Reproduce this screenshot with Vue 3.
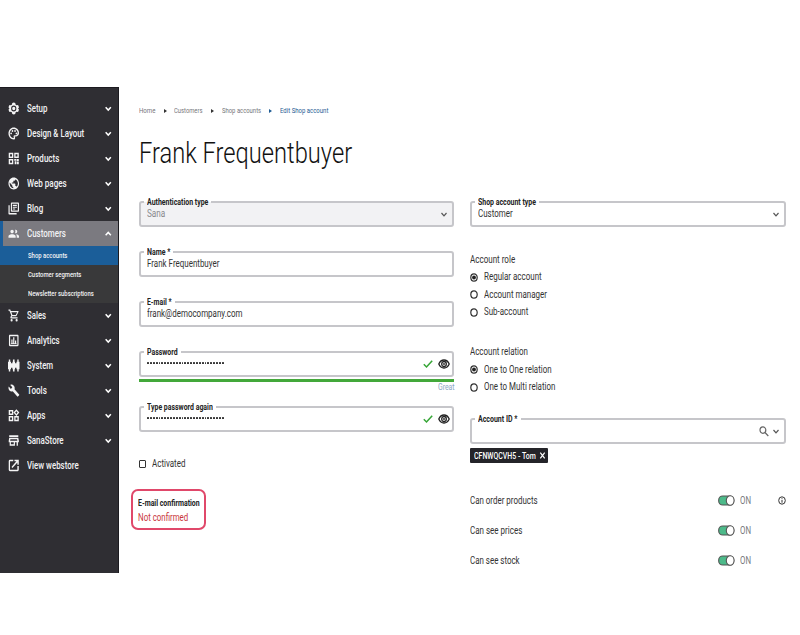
<script setup>
// Condenses a label horizontally so that it occupies the given width.
const fit = (el, { value }) => {
  el.style.transform = 'none'
  const natural = el.offsetWidth
  if (!natural || !value) return
  el.style.transform = `scaleX(${value / natural})`
  el.style.marginRight = `${value - natural}px`
}
const vFit = { mounted: fit, updated: fit }

const menuTop = [
  { icon: 'setup', label: 'Setup', w: 20.5 },
  { icon: 'palette', label: 'Design & Layout', w: 57 },
  { icon: 'products', label: 'Products', w: 32 },
  { icon: 'globe', label: 'Web pages', w: 39.5 },
  { icon: 'blog', label: 'Blog', w: 16 },
  { icon: 'people', label: 'Customers', w: 39, open: true },
]
const submenu = [
  { label: 'Shop accounts', w: 39.5, active: true },
  { label: 'Customer segments', w: 53.5 },
  { label: 'Newsletter subscriptions', w: 66 },
]
const menuBottom = [
  { icon: 'cart', label: 'Sales', w: 19.5 },
  { icon: 'chart', label: 'Analytics', w: 32.5 },
  { icon: 'system', label: 'System', w: 26.5 },
  { icon: 'tools', label: 'Tools', w: 19.5 },
  { icon: 'apps', label: 'Apps', w: 18.5 },
  { icon: 'store', label: 'SanaStore', w: 36.5 },
  { icon: 'external', label: 'View webstore', w: 52, leaf: true },
]
const groups = [
  { key: 'top', items: menuTop, sub: submenu },
  { key: 'bottom', items: menuBottom, sub: [] },
]
const icons = {
  setup: 'M12 1l3 1 1 3 2 1 3-.5 2 4-2 2.500 2 2.500-2 4-3-.5-2 1-1 3-3 1-3-1-1-3-2-1-3 .5-2-4 2-2.500-2-2.500 2-4 3 .5 2-1 1-3zM12 6.500a5.500 5.500 0 1 0 0 11 5.500 5.500 0 0 0 0-11zm0 2.200a3.300 3.300 0 1 1 0 6.600 3.300 3.300 0 0 1 0-6.600z',
  palette: 'M12 23C5.900 23 1 18.100 1 12S5.900 1 12 1s11 4.500 11 10c0 3.700-3 6.700-6.700 6.700h-1.600c-.28 0-.5.22-.5.5 0 .12.05.23.13.33.41.47.64 1.060.64 1.670A2.800 2.800 0 0 1 12 23zm0-19.300c-4.600 0-8.300 3.700-8.300 8.300s3.700 8.300 8.300 8.300c.28 0 .3-.22.3-.5a.54.54 0 0 0-.14-.35c-.41-.46-.63-1.050-.63-1.650a2.700 2.700 0 0 1 2.700-2.700H16.500c2 0 3.700-1.800 3.700-4 0-3.860-3.700-7.400-8.200-7.400zM6.500 10a1.800 1.800 0 1 0 0 3.600 1.800 1.800 0 0 0 0-3.600zM9.300 5.700a1.800 1.800 0 1 0 0 3.600 1.800 1.800 0 0 0 0-3.600zM14.700 5.700a1.800 1.800 0 1 0 0 3.600 1.800 1.800 0 0 0 0-3.600zM17.500 10a1.800 1.800 0 1 0 0 3.600 1.800 1.800 0 0 0 0-3.600z',
  products: 'M1.500 1.500h9.500v9.500H1.500zM4.300 4.300v4h4v-4zM13 1.500h9.500v9.500H13zM15.700 4.300v4h4v-4zM1.500 13h9.500v9.500H1.500zM4.300 15.700v4h4v-4zM13 13h4v3h-4zM18 13h4.500v4H18zM14 17h3v5.500h-3zM18 18h4.500v4.500H18z',
  globe: 'M12 1C5.900 1 1 5.900 1 12s4.900 11 11 11 11-4.900 11-11S18.100 1 12 1zm-1 19.800c-4.300-.5-7.600-4.200-7.600-8.700 0-.7.08-1.300.21-1.900L9 15.500v1c0 1.100.9 2 2 2zm7.300-2.800c-.26-.81-1-1.500-2-1.500h-1v-3.300c0-.55-.45-1-1-1H8v-2.200h2.200c.55 0 1-.45 1-1V6.700h2.200c1.100 0 2-.9 2-2v-.5c3.100 1.300 5.300 4.300 5.300 7.900 0 2.300-.9 4.300-2.400 5.900z',
  blog: 'M3.500 6H1v15c0 1.100.9 2 2 2h15v-2.500H3.500zM21 1H8C6.900 1 6 1.900 6 3v13c0 1.100.9 2 2 2h13c1.100 0 2-.9 2-2V3c0-1.100-.9-2-2-2zm-.5 14.700H8.300V3.300h12.200zM10 8.700h8.500v2H10zM10 12h5v2h-5zM10 5.300h8.500v2H10z',
  people: 'M16 11.500c1.900 0 3.300-1.500 3.300-3.300S17.900 5 16 5c-.5 0-1 .1-1.400.3.6.8.9 1.800.9 2.900s-.3 2.100-.9 2.900c.4.300.9.4 1.400.4zM8.500 11.500c1.900 0 3.500-1.500 3.500-3.300S10.400 5 8.500 5 5 6.400 5 8.200s1.600 3.300 3.500 3.300zm0 1.800C6 13.300 1 14.400 1 17v3h15v-3c0-2.600-5-3.700-7.500-3.700zm8 .1c1 .9 1.700 2 1.700 3.600v3H23v-3c0-2.300-3.700-3.400-6.500-3.600z',
  cart: 'M16 13.500c.8 0 1.500-.41 1.900-1.100L22 5a1 1 0 0 0-.9-1.500H5.800L4.700 1H1v2.300h2l3.800 8.200-1.500 2.700C4.400 15.800 5.400 17.500 7 17.500h13v-2.200H7.500l1-1.800zM7 5.800h12.200L16.200 11H9.200zM7.500 18.500a2.200 2.200 0 1 0 0 4.500 2.200 2.200 0 0 0 0-4.500zm10.500 0a2.200 2.200 0 1 0 0 4.500 2.200 2.200 0 0 0 0-4.500z',
  chart: 'M20 1.500H4c-1.100 0-2 .9-2 2v17c0 1.100.9 2 2 2h16c1.100 0 2-.9 2-2v-17c0-1.100-.9-2-2-2zm-.5 18.500h-15V4h15zM7 10h2.500v7H7zM10.800 6h2.500v11h-2.500zM14.600 12h2.500v5h-2.500zM6 17.300h12v1.200H6z',
  system: 'M1.700 1h3v4h1.600v3h3V5h1V1h3.400v4h1v3h3V5h1.600V1h3v4H24v14h-1.700v4h-3v-4h-1.600v-3h-3v3h-1v4h-3.400v-4h-1v-3h-3v3H4.700v4h-3v-4H0V5h1.700z',
  tools: 'M23.200 19.500l-9.600-9.600c.9-2.300.4-5-1.500-6.900-2-2-5-2.400-7.400-1.300L9 6 6 9 1.600 4.700C.4 7.100.9 10.100 2.900 12.100c1.900 1.900 4.600 2.400 6.900 1.500l9.600 9.600c.4.4 1 .4 1.400 0l2.400-2.300c.5-.4.5-1.100 0-1.400z',
  apps: 'M1.500 2h9.500v9H1.500zM4.300 4.700v3.600h4V4.700zM17.500.3l6.200 6.200-6.200 6.200-6.200-6.200zM17.500 4L15 6.500 17.500 9 20 6.500zM1.500 13h9.500v9.500H1.500zM4.300 15.700v4h4v-4zM13 13h9.500v9.500H13zM15.700 15.700v4h4v-4z',
  store: 'M2.500 2.500h19v3h-19zM2.500 7h19l1.200 5.500V15h-2v6.500h-2.700V15h-3.500v6.500h-11V15h-2v-2.500zM6 15v4h6v-4zM5 9.700l-.5 2.800h15L19 9.700z',
  external: 'M19.500 19.800H4.200V4.200H11V1.500H4A2.500 2.500 0 0 0 1.500 4v16A2.500 2.500 0 0 0 4 22.500h16a2.500 2.500 0 0 0 2.500-2.500V13h-3zM13.500 1.500v2.800h4L7.300 14.700l2 2L19.500 6.400v4h3V1.500z',
}
const crumbs = [
  { label: 'Home', w: 16.300 },
  { label: 'Customers', w: 28.800 },
  { label: 'Shop accounts', w: 39.300 },
  { label: 'Edit Shop account', w: 48, current: true },
]
const fields = [
  { label: 'Authentication type', lw: 61.500, value: 'Sana', w: 18, disabled: true },
  { label: 'Name *', lw: 23, value: 'Frank Frequentbuyer', w: 72.500 },
  { label: 'E-mail *', lw: 25, value: 'frank@democompany.com', w: 95.500 },
]
const passwords = [
  { label: 'Password', lw: 31, strength: true },
  { label: 'Type password again', lw: 66 },
]
const dots = Array.from({ length: 27 }, (_, i) => i)
const radioGroups = [
  { title: 'Account role', w: 45, options: [
    { label: 'Regular account', w: 57.500, on: true },
    { label: 'Account manager', w: 63 },
    { label: 'Sub-account', w: 44.500 },
  ] },
  { title: 'Account relation', w: 58, options: [
    { label: 'One to One relation', w: 67.500, on: true },
    { label: 'One to Multi relation', w: 71.500 },
  ] },
]
const toggles = [
  { label: 'Can order products', w: 67.500, info: true },
  { label: 'Can see prices', w: 52 },
  { label: 'Can see stock', w: 50 },
]
</script>

<template>
  <div class="page">
    <nav class="sidebar">
      <template v-for="g in groups" :key="g.key">
        <div v-for="m in g.items" :key="m.label" class="item" :class="{ open: m.open }">
          <svg class="icon" viewBox="0 0 24 24" preserveAspectRatio="none"><path :d="icons[m.icon]" fill-rule="evenodd" /></svg>
          <span class="grow"><span v-fit="m.w" class="t">{{ m.label }}</span></span>
          <svg v-if="!m.leaf" class="chev" viewBox="0 0 6 5"><path :d="m.open ? 'M.6 3.800 3 1.300l2.400 2.500' : 'M.6 1.200 3 3.700l2.400-2.500'" /></svg>
        </div>
        <div v-if="g.sub.length" class="submenu">
          <div v-for="s in g.sub" :key="s.label" class="sub" :class="{ active: s.active }">
            <span v-fit="s.w" class="t">{{ s.label }}</span>
          </div>
        </div>
      </template>
    </nav>

    <main class="content">
      <div class="crumbs">
        <template v-for="(c, i) in crumbs" :key="c.label">
          <i v-if="i" class="arrow" :class="{ current: c.current }"></i>
          <span :class="{ current: c.current }"><span v-fit="c.w" class="t">{{ c.label }}</span></span>
        </template>
      </div>
      <h1><span v-fit="213" class="t">Frank Frequentbuyer</span></h1>

      <div class="columns">
        <section class="col">
          <div v-for="f in fields" :key="f.label" class="field" :class="{ disabled: f.disabled }">
            <label class="label"><span v-fit="f.lw" class="t">{{ f.label }}</span></label>
            <span class="grow"><span v-fit="f.w" class="t">{{ f.value }}</span></span>
            <svg v-if="f.disabled" class="drop" viewBox="0 0 6 5"><path d="M.5 1 3 3.800 5.500 1" /></svg>
          </div>
          <template v-for="p in passwords" :key="p.label">
            <div class="field password">
              <label class="label"><span v-fit="p.lw" class="t">{{ p.label }}</span></label>
              <span class="grow dots"><i v-for="d in dots" :key="d"></i></span>
              <svg class="check" viewBox="0 0 10 8"><path d="M.8 4.300 3.500 7 9.200.7" /></svg>
              <svg class="eye" viewBox="0 0 12 10"><path d="M.8 5C2 2.200 3.800 1 6 1s4 1.200 5.200 4C10 7.800 8.200 9 6 9S2 7.800.8 5z" /><ellipse cx="6" cy="5" rx="2.300" ry="2.500" /><circle class="pupil" cx="6" cy="5" r=".9" /></svg>
            </div>
            <div v-if="p.strength" class="strength">
              <div class="bar"></div>
              <div class="great"><span v-fit="17" class="t">Great</span></div>
            </div>
          </template>
          <div class="activated"><i class="box"></i><span v-fit="33.500" class="t">Activated</span></div>
          <div class="confirm">
            <div class="row strong"><span v-fit="62" class="t">E-mail confirmation</span></div>
            <div class="row red"><span v-fit="50.500" class="t">Not confirmed</span></div>
          </div>
        </section>

        <section class="col">
          <div class="field">
            <label class="label"><span v-fit="58" class="t">Shop account type</span></label>
            <span class="grow"><span v-fit="35" class="t">Customer</span></span>
            <svg class="drop" viewBox="0 0 6 5"><path d="M.5 1 3 3.800 5.500 1" /></svg>
          </div>
          <div v-for="g in radioGroups" :key="g.title" class="radios">
            <div class="option"><span v-fit="g.w" class="t">{{ g.title }}</span></div>
            <div v-for="o in g.options" :key="o.label" class="option">
              <svg class="radio" viewBox="0 0 8 9"><ellipse cx="4" cy="4.500" rx="3.200" ry="3.600" /><circle v-if="o.on" class="pupil" cx="4" cy="4.500" r="1.900" /></svg>
              <span v-fit="o.w" class="t">{{ o.label }}</span>
            </div>
          </div>
          <div class="field account">
            <label class="label"><span v-fit="39.500" class="t">Account ID *</span></label>
            <span class="grow"></span>
            <svg class="search" viewBox="0 0 10 11"><ellipse cx="3.900" cy="4.100" rx="2.900" ry="3.200" /><path d="M6 6.500 9.300 10" /></svg>
            <svg class="drop" viewBox="0 0 6 5"><path d="M.5 1 3 3.800 5.500 1" /></svg>
          </div>
          <div class="tag">
            <span v-fit="61.500" class="t">CFNWQCVH5 - Tom</span>
            <svg viewBox="0 0 5 7"><path d="M.3.7l4.400 5.600M4.700.7l-4.400 5.600" /></svg>
          </div>
          <div class="toggles">
            <div v-for="s in toggles" :key="s.label" class="toggle">
              <span class="grow"><span v-fit="s.w" class="t">{{ s.label }}</span></span>
              <svg class="switch" viewBox="0 0 17 11"><rect x=".7" y="1" width="15" height="9" rx="4" /><ellipse cx="12.200" cy="5.500" rx="3.900" ry="4.700" /></svg>
              <span class="on"><span v-fit="11" class="t">ON</span></span>
              <svg class="info" viewBox="0 0 8 9"><g v-if="s.info"><ellipse cx="4" cy="4.500" rx="3.300" ry="3.700" /><path d="M4 4v2.700M4 2.300v.9" /></g></svg>
            </div>
          </div>
        </section>
      </div>
    </main>
  </div>
</template>

<style>
body { background: #fff; }
</style>

<style scoped>
.page { box-sizing: border-box; width: 800px; height: 635px; padding: 87px 0 62px; display: flex; background: #fff; font: 400 10px/12px Roboto, "Liberation Sans", sans-serif; color: #333; overflow: hidden; }
.page * { box-sizing: border-box; }
.t { display: inline-block; white-space: nowrap; transform-origin: left center; }
.grow { flex: 1; min-width: 0; display: flex; }
svg { display: block; flex: none; fill: none; overflow: visible; }

.sidebar { width: 118.500px; height: 486px; padding-top: 8px; background: #2f2e33; color: #f2f2f4; font-weight: 500; border-top: 1px solid #1c1b20; border-right: 1px solid #1c1b20; }
.item { height: 25px; display: flex; align-items: center; padding: .8px 6px 0 8px; }
.item.open { background: #7b7a80; border-left: 3px solid #1b5e9c; padding-left: 5px; }
.icon { width: 11.500px; height: 13px; margin-right: 7.800px; fill: #f4f4f5; }
.chev { width: 6.500px; height: 5.500px; stroke: #fff; stroke-width: 1.400; }
.submenu { height: 57px; background: #39393a; display: grid; grid-template-rows: repeat(3, 1fr); }
.sub { display: flex; align-items: center; padding-left: 27.500px; font-size: 7.500px; line-height: 9px; }
.sub.active { background: #1b5e99; }

.content { width: 647px; margin-left: 20px; }
.crumbs { display: flex; align-items: center; height: 10px; margin-top: 19px; font-size: 7.500px; line-height: 10px; color: #75757a; }
.crumbs span { display: flex; }
.crumbs .t { display: inline-block; }
.arrow { width: 0; height: 0; margin: 0 7.500px 0 8.600px; border: solid transparent; border-width: 2px 0 2px 3px; border-left-color: #333; }
.arrow.current { border-left-color: #1e5b94; }
.current { color: #1e5b94; }
h1 { margin: 19px 0 0; height: 36px; font-size: 30px; line-height: 36px; font-weight: 300; color: #111; display: flex; }

.columns { display: flex; gap: 15.500px; margin-top: 30px; }
.col { width: 316px; }
.field { position: relative; display: flex; align-items: center; height: 26px; margin-bottom: 24px; padding: 0 5px 0 6.500px; border: 2px solid #c6c6ca; border-radius: 3px; }
.disabled { background: #f2f2f4; color: #88888c; }
.label { position: absolute; left: 3.500px; top: -7px; height: 12px; padding: 0 3px; display: flex; background: #fff; font-size: 8.500px; font-weight: 700; color: #222; }
.disabled .label { background: linear-gradient(#fff 0 6px, #f2f2f4 6px); }
.drop { width: 6px; height: 5px; stroke: #555; stroke-width: 1.200; }
.password { margin-bottom: 0; padding-right: 4px; }
.dots { gap: 1px; margin-top: -2px; }
.dots i { width: 1.880px; height: 2px; background: #333; border-radius: .5px; }
.check { width: 10px; height: 8px; margin-right: 5px; stroke: #35a535; stroke-width: 1.500; }
.eye { width: 12px; height: 10px; margin-right: -2px; stroke: #222; stroke-width: 1.300; }
.pupil { fill: #222; stroke: none; }
.strength { height: 29px; padding-top: 2px; }
.bar { height: 2.500px; background: #43a83a; }
.great { display: flex; justify-content: flex-end; height: 12px; margin-top: -.5px; font-size: 8.500px; color: #8ba6c5; }
.activated { display: flex; align-items: center; gap: 6px; height: 12px; margin: 26px 0 0 .5px; }
.activated .box { width: 7px; height: 8px; border: 1px solid #333; border-radius: 1px; }
.confirm { width: 75px; height: 41px; margin: 19px 0 0 -7.400px; padding: 4px 0 0 5px; border: 2px solid #e0486a; border-radius: 7px; }
.row { display: flex; height: 15px; align-items: center; }
.strong { font-size: 8.500px; font-weight: 700; color: #222; }
.red { color: #c9363c; }

.radios { margin-top: .4px; }
.radios + .radios { margin-top: 22.300px; }
.option { display: flex; align-items: center; height: 17.500px; }
.radio { width: 8px; height: 9px; margin-right: 6px; stroke: #333; stroke-width: 1.200; }
.account { margin: 22.600px 0 0; }
.search { width: 10px; height: 11px; margin-right: 4px; stroke: #666; stroke-width: 1.200; }
.tag { width: 78.500px; height: 15px; margin-top: 4px; padding: 0 3px 0 4px; display: flex; align-items: center; justify-content: space-between; background: #242429; color: #fff; border-radius: 1px; font-size: 8.500px; font-weight: 500; }
.tag svg { width: 5px; height: 7px; stroke: #fff; stroke-width: 1.200; }
.toggles { margin-top: 22.500px; }
.toggle { height: 30px; display: flex; align-items: center; }
.switch { width: 17px; height: 11px; stroke: #555; stroke-width: 1.100; }
.switch rect { fill: #4dba8a; }
.switch ellipse { fill: #fff; }
.on { display: flex; width: 11px; margin: 0 27px 0 4.500px; color: #77777c; }
.info { width: 8px; height: 9px; stroke: #333; stroke-width: 1; }
</style>
